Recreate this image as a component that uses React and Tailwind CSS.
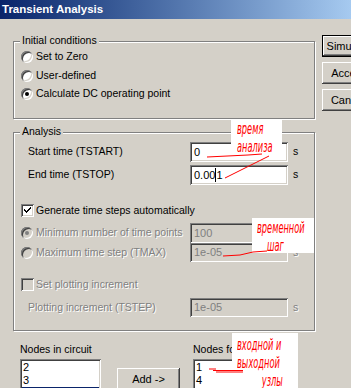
import React from "react";

const sunken =
  "shadow-[inset_1px_1px_0_#808080,inset_-1px_-1px_0_#ffffff,inset_2px_2px_0_#404040,inset_-2px_-2px_0_#d4d0c8]";
const raised =
  "shadow-[inset_-1px_-1px_0_#404040,inset_1px_1px_0_#ffffff,inset_-2px_-2px_0_#808080,inset_2px_2px_0_#d4d0c8]";
const etched =
  "relative border border-[#808080] shadow-[inset_1px_1px_0_#ffffff,1px_1px_0_#ffffff]";
const dis = "text-[#808080] [text-shadow:1px_1px_0_#ffffff]";
const hand =
  "block w-max h-[18px] font-['DejaVu_Sans',sans-serif] italic text-[#ff0000] text-[15px] leading-[18px] whitespace-nowrap origin-left scale-x-[0.55]";

function Radio({ checked, disabled }) {
  return (
    <div
      className={`w-[12px] h-[12px] shrink-0 rounded-full flex items-center justify-center ${sunken} ${
        disabled ? "bg-[#d4d0c8]" : "bg-white"
      }`}
    >
      {checked && (
        <div
          className={`w-[4px] h-[4px] rounded-full ${
            disabled ? "bg-[#808080]" : "bg-black"
          }`}
        />
      )}
    </div>
  );
}

function Check({ checked, disabled }) {
  return (
    <div
      className={`w-[13px] h-[13px] shrink-0 relative ${sunken} ${
        disabled ? "bg-[#d4d0c8]" : "bg-white"
      }`}
    >
      {checked && (
        <svg width="13" height="13" viewBox="0 0 13 13" className="block">
          <path
            d="M3 5 L3 7 L5 9 L10 4 L10 2 L5 7 Z"
            fill="#000"
            shapeRendering="crispEdges"
          />
        </svg>
      )}
    </div>
  );
}

function Input({ children, disabled, h = "h-[20px]" }) {
  return (
    <div
      className={`w-[98px] ${h} shrink-0 flex items-center pl-[4px] ${sunken} ${
        disabled ? "bg-[#d4d0c8] text-[#808080]" : "bg-white text-black"
      } text-[11px]`}
    >
      {children}
    </div>
  );
}

function Group({ label, h, mt, children }) {
  return (
    <div className={`${etched} ${h} ${mt}`}>
      <span className="absolute -top-[8px] left-[6px] px-[2px] bg-[#d4d0c8] leading-[13px]">
        {label}
      </span>
      {children}
    </div>
  );
}

export default function App() {
  return (
    <div className="w-[351px] h-[388px] overflow-hidden bg-[#d4d0c8] relative font-['Liberation_Sans',Arial,sans-serif] text-[10.5px] text-black">
      <div className="h-[19px] flex items-center pl-[2px] bg-linear-to-r from-[#0a246a] to-[#a6caf0] text-white font-bold text-[11.5px]">
        Transient Analysis
      </div>

      <div className="flex">
        <div className="ml-[13px] mt-[22px] w-[302px] shrink-0 flex flex-col">
          <Group label="Initial conditions" h="h-[78px]" mt="mt-0">
            <div className="flex flex-col pt-[6px] pl-[7px]">
              <div className="h-[18.5px] flex items-center gap-[3px]">
                <Radio />
                <span>Set to Zero</span>
              </div>
              <div className="h-[18.5px] flex items-center gap-[3px]">
                <Radio />
                <span>User-defined</span>
              </div>
              <div className="h-[18.5px] flex items-center gap-[3px]">
                <Radio checked />
                <span>Calculate DC operating point</span>
              </div>
            </div>
          </Group>

          <Group label="Analysis" h="h-[199px]" mt="mt-[13px]">
            <div className="flex flex-col pt-[9px]">
              <div className="h-[20px] flex items-center">
                <span className="w-[176px] pl-[14px] shrink-0">Start time (TSTART)</span>
                <Input>0</Input>
                <span className="ml-[5px]">s</span>
              </div>
              <div className="h-[20px] mt-[3px] flex items-center">
                <span className="w-[176px] pl-[14px] shrink-0">End time (TSTOP)</span>
                <Input>
                  0.00<span className="inline-block w-[1px] h-[14px] bg-black" />1
                </Input>
                <span className="ml-[5px]">s</span>
              </div>
              <div className="h-[13px] mt-[19px] flex items-center gap-[2px] pl-[7px]">
                <Check checked />
                <span>Generate time steps automatically</span>
              </div>
              <div className="h-[20px] mt-[6px] flex items-center">
                <div className="w-[176px] pl-[7px] shrink-0 flex items-center gap-[3px]">
                  <Radio checked disabled />
                  <span className={dis}>Minimum number of time points</span>
                </div>
                <Input disabled>100</Input>
              </div>
              <div className="h-[19px] flex items-center">
                <div className="w-[176px] pl-[7px] shrink-0 flex items-center gap-[3px]">
                  <Radio disabled />
                  <span className={dis}>Maximum time step (TMAX)</span>
                </div>
                <Input disabled h="h-[19px]">1e-05</Input>
                <span className={`ml-[5px] ${dis}`}>s</span>
              </div>
              <div className="h-[13px] mt-[16px] flex items-center gap-[2px] pl-[7px]">
                <Check disabled />
                <span className={dis}>Set plotting increment</span>
              </div>
              <div className="h-[19px] mt-[7px] flex items-center">
                <span className={`w-[176px] pl-[14px] shrink-0 ${dis}`}>
                  Plotting increment (TSTEP)
                </span>
                <Input disabled h="h-[19px]">1e-05</Input>
                <span className={`ml-[5px] ${dis}`}>s</span>
              </div>
            </div>
          </Group>

          <div className="flex items-start pl-[7px] mt-[12px]">
            <div className="w-[81px] shrink-0 flex flex-col">
              <span className="h-[13px] leading-[13px]">Nodes in circuit</span>
              <div className={`mt-[3px] h-[60px] bg-white ${sunken} p-[2px] flex flex-col text-[11px]`}>
                <div className="h-[13px] leading-[13px] pl-[1px]">2</div>
                <div className="h-[13px] leading-[13px] pl-[1px]">3</div>
                <div className="h-[13px] leading-[13px] pl-[1px] bg-[#0a246a] text-white">5</div>
              </div>
            </div>
            <div
              className={`ml-[16px] mt-[25px] w-[63px] h-[23px] shrink-0 flex items-center justify-center ${raised} text-[11px]`}
            >
              Add -&gt;
            </div>
            <div className="ml-[13px] w-[82px] shrink-0 flex flex-col">
              <span className="h-[13px] leading-[13px] whitespace-nowrap">Nodes for output</span>
              <div className={`mt-[3px] h-[60px] bg-white ${sunken} p-[2px] flex flex-col text-[11px]`}>
                <div className="h-[13px] leading-[13px] pl-[1px]">1</div>
                <div className="h-[13px] leading-[13px] pl-[1px]">4</div>
              </div>
            </div>
          </div>
        </div>

        <div className="ml-[7px] mt-[16px] flex flex-col gap-[5px] shrink-0">
          <div className="w-[52px] h-[22px] border border-black">
            <div className={`w-full h-full flex items-center justify-center ${raised} text-[11px]`}>
              Simulate
            </div>
          </div>
          <div className={`w-[52px] h-[22px] flex items-center justify-center ${raised} text-[11px]`}>
            Accept
          </div>
          <div className={`w-[52px] h-[22px] flex items-center justify-center ${raised} text-[11px]`}>
            Cancel
          </div>
        </div>
      </div>

      {/* annotations */}
      <div className="absolute left-[231px] top-[120px] w-[51px] h-[32px] bg-white pl-[6px]">
        <span className={hand}>время</span>
        <span className={hand}>анализа</span>
      </div>
      <div className="absolute left-[252px] top-[218px] w-[62px] h-[35px] bg-white pl-[5px] pt-[1px]">
        <span className={hand}>временной</span>
        <span className={`${hand} pl-[18px]`}>шаг</span>
      </div>
      <div className="absolute left-[232px] top-[333px] w-[66px] h-[60px] bg-white pl-[5px] pt-[3px]">
        <span className={hand}>входной и</span>
        <span className={hand}>выходной</span>
        <span className={`${hand} pl-[45px]`}>узлы</span>
      </div>

      <svg
        className="absolute left-0 top-0 pointer-events-none"
        width="351"
        height="388"
        viewBox="0 0 351 388"
      >
        <g stroke="#ff0000" strokeWidth="1" fill="none">
          <polyline points="207,157 248,155 262,154" />
          <line x1="225" y1="178" x2="269" y2="156" />
          <polyline points="223,256 240,255 253,252 267,251" />
          <line x1="209" y1="369" x2="216" y2="369" />
          <line x1="213" y1="370.5" x2="243" y2="370.5" />
          <line x1="216" y1="372" x2="243" y2="372" />
        </g>
      </svg>
    </div>
  );
}
